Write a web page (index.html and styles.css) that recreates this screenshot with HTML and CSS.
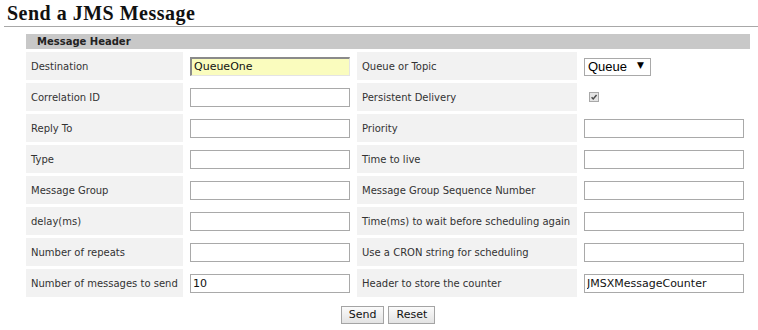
FILE: index.html
```html
<!DOCTYPE html>
<html lang="en">
<head>
  <meta charset="UTF-8">
  <title>Send a JMS Message</title>
  <link rel="stylesheet" href="styles.css">
</head>
<body>
  <h1 class="title">Send a JMS Message</h1>

  <form class="send-form">
    <div class="grid">
      <div class="head">Message Header</div>

      <div class="label">Destination</div>
      <div class="field"><input type="text" class="text hilite" value="QueueOne"></div>
      <div class="label">Queue or Topic</div>
      <div class="field">
        <span class="select">
          <select>
            <option>Queue</option>
            <option>Topic</option>
          </select>
        </span>
      </div>

      <div class="label">Correlation ID</div>
      <div class="field"><input type="text" class="text"></div>
      <div class="label">Persistent Delivery</div>
      <div class="field">
        <span class="check">
          <svg width="10" height="10" viewBox="0 0 10 10">
            <path d="M2 5.2 L4 7.4 L8.2 2.4" fill="none" stroke="#4a4a4a" stroke-width="1.8"/>
          </svg>
        </span>
      </div>

      <div class="label">Reply To</div>
      <div class="field"><input type="text" class="text"></div>
      <div class="label">Priority</div>
      <div class="field"><input type="text" class="text"></div>

      <div class="label">Type</div>
      <div class="field"><input type="text" class="text"></div>
      <div class="label">Time to live</div>
      <div class="field"><input type="text" class="text"></div>

      <div class="label">Message Group</div>
      <div class="field"><input type="text" class="text"></div>
      <div class="label">Message Group Sequence Number</div>
      <div class="field"><input type="text" class="text"></div>

      <div class="label">delay(ms)</div>
      <div class="field"><input type="text" class="text"></div>
      <div class="label">Time(ms) to wait before scheduling again</div>
      <div class="field"><input type="text" class="text"></div>

      <div class="label">Number of repeats</div>
      <div class="field"><input type="text" class="text"></div>
      <div class="label">Use a CRON string for scheduling</div>
      <div class="field"><input type="text" class="text"></div>

      <div class="label">Number of messages to send</div>
      <div class="field"><input type="text" class="text" value="10"></div>
      <div class="label">Header to store the counter</div>
      <div class="field"><input type="text" class="text" value="JMSXMessageCounter"></div>
    </div>

    <div class="buttons">
      <button type="button" class="btn">Send</button>
      <button type="reset" class="btn">Reset</button>
    </div>
  </form>
</body>
</html>
```

FILE: styles.css
```css
body {
  margin: 0;
  background: #fff;
  font-family: "DejaVu Sans", Verdana, sans-serif;
  color: #333;
}
.title {
  margin: 0 0 0 4px;
  padding: 4px 3px 3px;
  font-family: "Liberation Serif", Georgia, serif;
  font-size: 20px;
  line-height: 19px;
  letter-spacing: 0.5px;
  font-weight: bold;
  color: #111;
  border-bottom: 1px solid #a8a8a8;
}
.send-form {
  margin: 7px 0 0 26px;
  width: 724px;
}
.grid {
  display: grid;
  grid-template-columns: 157px 174px 220px 173px;
  row-gap: 3px;
}
.head {
  grid-column: 1 / -1;
  height: 15px;
  line-height: 15px;
  padding-left: 11px;
  background: #c8c8c8;
  font-size: 10px;
  font-weight: bold;
  color: #222;
}
.label {
  height: 28px;
  display: flex;
  align-items: center;
  padding-left: 5px;
  background: #f2f2f2;
  font-size: 10px;
  white-space: nowrap;
}
.field {
  height: 28px;
  display: flex;
  align-items: center;
  padding-left: 7px;
}
.text {
  box-sizing: border-box;
  width: 160px;
  height: 19px;
  margin: 0;
  padding: 0 2px;
  border: 1px solid #a9a9a9;
  background: #fff;
  font-family: "DejaVu Sans", Verdana, sans-serif;
  font-size: 11px;
  color: #111;
  outline: none;
}
.hilite {
  background: #fafcbe;
  border-color: #e4e4e4;
  border-top: 2px solid #8a8a8a;
  border-left: 2px solid #8a8a8a;
}
.select {
  position: relative;
  display: inline-block;
}
.select select {
  appearance: none;
  box-sizing: border-box;
  width: 67px;
  height: 18px;
  margin: 0;
  padding: 0 0 0 3px;
  border: 1px solid #a9a9a9;
  border-radius: 0;
  background: #fff;
  font-family: "Liberation Sans", Arial, sans-serif;
  font-size: 13px;
  line-height: 16px;
  color: #000;
}
.select::after {
  content: "▼";
  position: absolute;
  right: 7px;
  top: 3px;
  font-family: "DejaVu Sans", sans-serif;
  font-size: 9px;
  line-height: 12px;
  color: #000;
  pointer-events: none;
}
.check {
  box-sizing: border-box;
  display: inline-flex;
  width: 10px;
  height: 10px;
  margin-left: 5px;
  border: 1px solid #a8a8a8;
  background: #e4e4e4;
  align-items: center;
  justify-content: center;
}
.check svg {
  display: block;
}
.buttons {
  display: flex;
  justify-content: center;
  gap: 4px;
  margin-top: 9px;
}
.btn {
  height: 18px;
  padding: 0 7px;
  margin: 0;
  border: 1px solid #a4a4a4;
  border-radius: 0;
  background: linear-gradient(#fbfbfb, #e3e3e3);
  font-family: "DejaVu Sans", Verdana, sans-serif;
  font-size: 11px;
  line-height: 16px;
  color: #111;
}
```
